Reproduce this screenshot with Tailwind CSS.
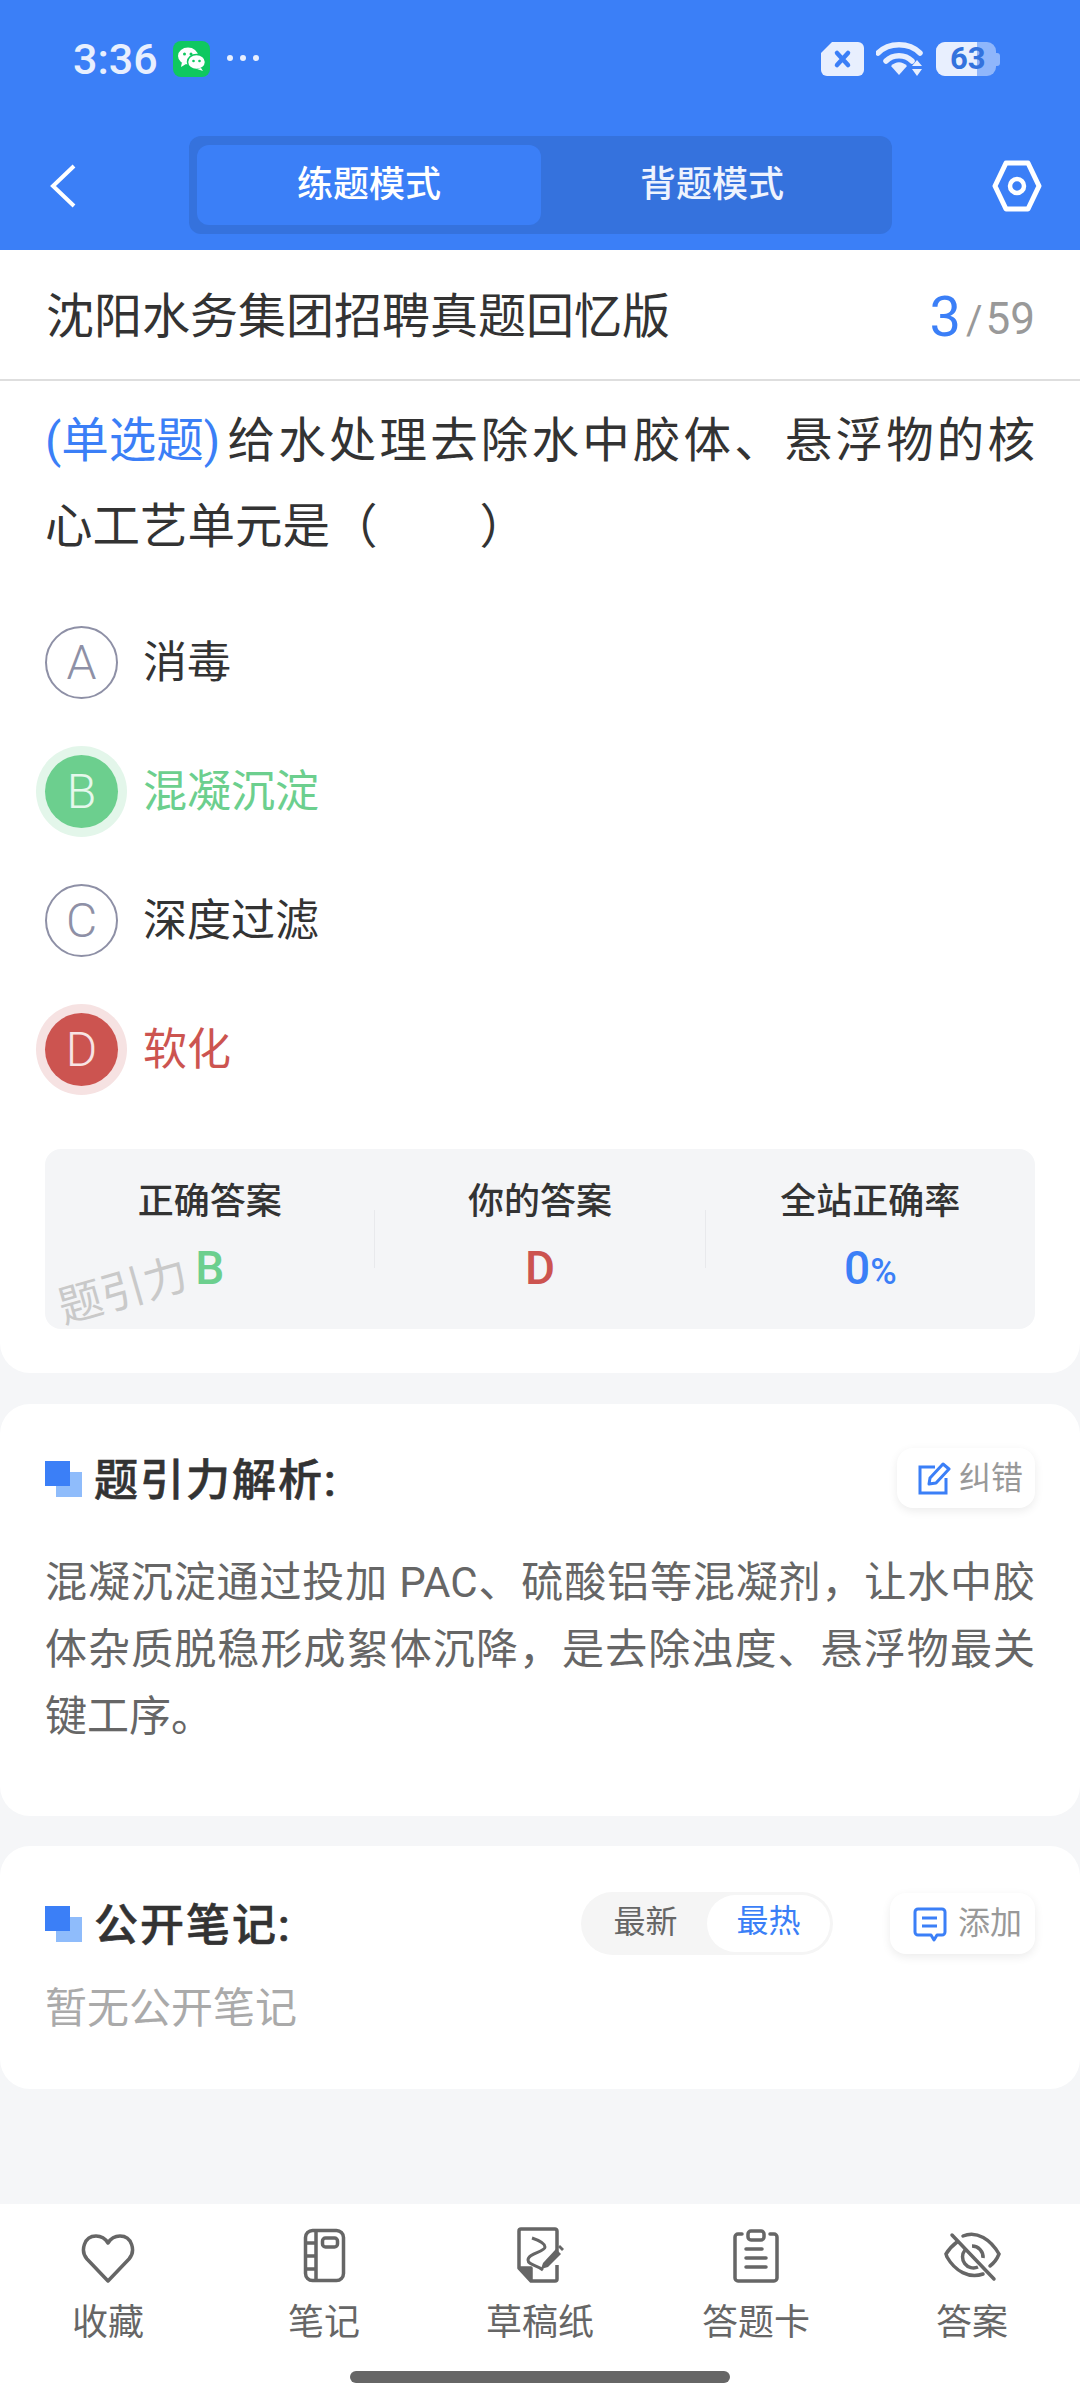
<!DOCTYPE html>
<html lang="zh-CN">
<head>
    <meta charset="UTF-8">
    <meta name="viewport" content="width=device-width, initial-scale=1.0">
    <title>练题模式</title>
    <script src="https://cdn.jsdelivr.net/npm/@tailwindcss/browser@4"></script>
</head>
<body class="font-[family-name:Roboto,'Noto_Sans_CJK_SC',sans-serif]">
<div class="w-[1080px] h-[2400px] bg-[#f5f6f8] flex flex-col overflow-hidden">

    <!-- blue header -->
    <header class="h-[250px] bg-[#3b7ff7] shrink-0">
        <div class="h-[118px] pt-[38px] pl-[73px] pr-[80px] flex items-start">
            <span class="text-[43px] leading-[42px] font-medium text-[#e8effe] w-[100px]">3:36</span>
            <svg class="mt-[3px]" width="37" height="36" viewBox="0 0 37 36">
                <rect width="37" height="36" rx="8" fill="#0fc860"/>
                <ellipse cx="15" cy="15" rx="10" ry="8.500" fill="#fff"/>
                <path d="M9 21l-1 5 5-3z" fill="#fff"/>
                <ellipse cx="23.500" cy="21" rx="9" ry="7.500" fill="#fff" stroke="#0fc860" stroke-width="1.500"/>
                <path d="M28 27l2 3-6-2z" fill="#fff"/>
                <circle cx="11.500" cy="13" r="1.500" fill="#0fc860"/><circle cx="18" cy="13" r="1.500" fill="#0fc860"/>
                <circle cx="20.500" cy="20" r="1.300" fill="#0fc860"/><circle cx="26.500" cy="20" r="1.300" fill="#0fc860"/>
            </svg>
            <div class="ml-[17px] mt-[17px] flex gap-[7px]">
                <i class="w-[6px] h-[6px] rounded-full bg-[#e8effe]"></i>
                <i class="w-[6px] h-[6px] rounded-full bg-[#e8effe]"></i>
                <i class="w-[6px] h-[6px] rounded-full bg-[#e8effe]"></i>
            </div>
            <div class="ml-auto mt-[4px] flex items-start">
                <svg width="43" height="34" viewBox="0 0 43 34">
                    <path d="M11 0H37a6 6 0 0 1 6 6V28a6 6 0 0 1-6 6H6a6 6 0 0 1-6-6V11z" fill="#e8effe"/>
                    <path d="M16 11l11 12M27 11L16 23" stroke="#3b7ff7" stroke-width="4.500" stroke-linecap="round"/>
                </svg>
                <svg class="ml-[12px]" width="47" height="34" viewBox="0 0 47 34">
                    <path d="M2 11C13 0 33 0 44 11" fill="none" stroke="#e8effe" stroke-width="5.500" stroke-linecap="round"/>
                    <path d="M10 19C17 12 29 12 36 19" fill="none" stroke="#e8effe" stroke-width="5.500" stroke-linecap="round"/>
                    <path d="M15 24C20 19 26 19 31 24L23 33z" fill="#e8effe"/>
                    <path d="M41 18l5 6H36zM41 34l5-7H36z" fill="#e8effe"/>
                </svg>
                <div class="ml-[13px] relative w-[60px] h-[34px] rounded-[9px] bg-[#8fb6fb]">
                    <div class="w-[41px] h-full rounded-l-[9px] bg-[#e8effe]"></div>
                    <span class="absolute left-[14px] top-0 text-[31px] leading-[34px] font-bold text-[#3372dd]">63</span>
                </div>
                <div class="w-[4px] h-[13px] mt-[11px] rounded-r-[3px] bg-[#8fb6fb]"></div>
            </div>
        </div>
        <nav class="flex items-start pl-[50px]">
            <svg class="mt-[46px]" width="26" height="44" viewBox="0 0 26 44">
                <path d="M24 2L3 22l21 20" fill="none" stroke="#fff" stroke-width="4"/>
            </svg>
            <div class="ml-[113px] mt-[18px] w-[703px] h-[98px] rounded-[12px] bg-[#3572dd] p-[9px] pl-[8px] pr-0 flex text-[36px] leading-[80px] font-medium text-center text-white">
                <div class="w-[344px] rounded-[12px] bg-[#3b7ff7]">练题模式</div>
                <div class="w-[342px] text-[#eef3fe]">背题模式</div>
            </div>
            <svg class="ml-[100px] mt-[41px]" width="50" height="54" viewBox="0 0 50 54">
                <path d="M14 4H36L47 27 36 50H14L3 27z" fill="none" stroke="#fff" stroke-width="5" stroke-linejoin="round"/>
                <circle cx="25" cy="27" r="7" fill="none" stroke="#fff" stroke-width="4.500"/>
            </svg>
        </nav>
    </header>

    <!-- question card -->
    <section class="bg-white rounded-b-[30px] h-[1123px] shrink-0">
        <div class="h-[131px] border-b-2 border-[#dedede] pt-[4px] px-[45px] pl-[46px] flex items-center justify-between">
            <h1 class="text-[48px] font-normal text-[#333]">沈阳水务集团招聘真题回忆版</h1>
            <div class="flex items-baseline text-[40px] text-[#999]">
                <span class="text-[56px] text-[#3b7ff7]">3</span>
                <span class="ml-[5px] -translate-y-[2px]">/</span>
                <span class="ml-[3px] text-[44px] -translate-y-[2px]">59</span>
            </div>
        </div>
        <p class="mt-[17px] mx-[45px] text-[47.500px] leading-[86px] text-[#333] text-justify [text-align-last:justify]"><span class="inline-block mr-[4px] text-[#3b7ff7]">(单选题)</span>给水处理去除水中胶体、悬浮物的核</p>
        <p class="mx-[45px] text-[47.500px] leading-[86px] text-[#333]">心工艺单元是（<span class="inline-block w-[102px]"></span>）</p>

        <ul class="mt-[28px] px-[45px]">
            <li class="h-[129px] flex items-center">
                <div class="w-[73px] h-[73px] rounded-full border-2 border-[#8e90a6] text-[#8e90a6] text-[48px] font-light flex items-center justify-center">A</div>
                <span class="ml-[25px] text-[44px] text-[#333]">消毒</span>
            </li>
            <li class="h-[129px] flex items-center">
                <div class="w-[73px] h-[73px] rounded-full bg-[#6ccf8e] ring-[9px] ring-[#e3f6ea] text-[#e6f8ec] text-[48px] font-light flex items-center justify-center">B</div>
                <span class="ml-[25px] text-[44px] text-[#6ccf8e]">混凝沉淀</span>
            </li>
            <li class="h-[129px] flex items-center">
                <div class="w-[73px] h-[73px] rounded-full border-2 border-[#8e90a6] text-[#8e90a6] text-[48px] font-light flex items-center justify-center">C</div>
                <span class="ml-[25px] text-[44px] text-[#333]">深度过滤</span>
            </li>
            <li class="h-[129px] flex items-center">
                <div class="w-[73px] h-[73px] rounded-full bg-[#cc5450] ring-[9px] ring-[#f6e2e2] text-[#f8e4e4] text-[48px] font-light flex items-center justify-center">D</div>
                <span class="ml-[25px] text-[44px] text-[#cc5450]">软化</span>
            </li>
        </ul>

        <div class="relative mt-[35px] mx-[45px] h-[180px] rounded-[16px] bg-[#f4f5f7] flex items-center">
            <div class="flex-1 h-full flex flex-col items-center pt-[31px]">
                <span class="text-[36px] leading-[44px] font-medium text-[#333]">正确答案</span>
                <span class="mt-[18px] text-[46px] leading-[52px] font-medium text-[#6ccf8e]">B</span>
            </div>
            <div class="w-px h-[58px] bg-[#e8e9ec]"></div>
            <div class="flex-1 h-full flex flex-col items-center pt-[31px]">
                <span class="text-[36px] leading-[44px] font-medium text-[#333]">你的答案</span>
                <span class="mt-[18px] text-[46px] leading-[52px] font-medium text-[#cc5450]">D</span>
            </div>
            <div class="w-px h-[58px] bg-[#e8e9ec]"></div>
            <div class="flex-1 h-full flex flex-col items-center pt-[31px]">
                <span class="text-[36px] leading-[44px] font-medium text-[#333]">全站正确率</span>
                <span class="mt-[18px] text-[46px] leading-[52px] font-medium text-[#3b7ff7]">0<span class="text-[36px]">%</span></span>
            </div>
            <!-- watermark -->
            <span class="absolute left-[12px] top-[117px] text-[44px] leading-[50px] text-[#c9c9c9] -rotate-[16deg]">题引力</span>
        </div>
    </section>

    <!-- explanation card -->
    <section class="mt-[31px] bg-white rounded-[30px] h-[412px] shrink-0 pt-[44px] px-[45px]">
        <div class="h-[60px] flex items-center justify-between">
            <div class="flex items-center">
                <div class="relative w-[37px] h-[36px] mt-[2px]">
                    <i class="absolute left-[11px] top-[11px] w-[26px] h-[25px] bg-[#8fbcfb]"></i>
                    <i class="absolute left-0 top-0 w-[25px] h-[25px] bg-[#3b7ff7]"></i>
                </div>
                <h2 class="ml-[12px] pt-[5px] text-[44px] font-medium tracking-[2px] text-[#333] [-webkit-text-stroke:0.6px_#333]">题引力解析:</h2>
            </div>
            <button class="w-[138px] h-[60px] rounded-[16px] bg-white shadow-[0_3px_10px_rgba(0,0,0,0.08)] flex items-center pl-[21px] gap-[8px] text-[32px] text-[#999]">
                <svg width="33" height="33" viewBox="0 0 33 33">
                    <path d="M17 5H2V31H28V16" fill="none" stroke="#3b7ff7" stroke-width="3"/>
                    <path d="M12 16L25 2l6 5L18 21l-7 1z" fill="none" stroke="#3b7ff7" stroke-width="3" stroke-linejoin="round"/>
                </svg>
                纠错
            </button>
        </div>
        <p class="mt-[41px] text-[42px] leading-[67px] text-[#666] text-justify">混凝沉淀通过投加 PAC、硫酸铝等混凝剂，让水中胶体杂质脱稳形成絮体沉降，是去除浊度、悬浮物最关键工序。</p>
    </section>

    <!-- public notes card -->
    <section class="mt-[30px] bg-white rounded-[30px] h-[243px] shrink-0 pt-[46px] px-[45px]">
        <div class="h-[63px] flex items-center">
            <div class="relative w-[37px] h-[36px]">
                <i class="absolute left-[11px] top-[11px] w-[26px] h-[25px] bg-[#8fbcfb]"></i>
                <i class="absolute left-0 top-0 w-[25px] h-[25px] bg-[#3b7ff7]"></i>
            </div>
            <h2 class="ml-[12px] pt-[5px] text-[44px] font-medium tracking-[2px] text-[#333] [-webkit-text-stroke:0.6px_#333]">公开笔记:</h2>
            <div class="ml-auto w-[252px] h-[63px] rounded-full bg-[#f5f5f5] p-[3px] flex items-center text-[32px] text-center">
                <span class="w-[123px] pb-[3px] text-[#666]">最新</span>
                <span class="w-[123px] h-[57px] leading-[53px] rounded-full bg-white text-[#3b7ff7]">最热</span>
            </div>
            <button class="ml-[57px] w-[145px] h-[61px] rounded-[16px] bg-white shadow-[0_3px_10px_rgba(0,0,0,0.08)] flex items-center pl-[22px] gap-[10px] text-[32px] text-[#999]">
                <svg width="36" height="36" viewBox="0 0 36 36">
                    <path d="M6 3H30a3 3 0 0 1 3 3V26a3 3 0 0 1-3 3H25l-3 5-3-5H6a3 3 0 0 1-3-3V6a3 3 0 0 1 3-3z" fill="none" stroke="#3b7ff7" stroke-width="3" stroke-linejoin="round"/>
                    <path d="M10 12H25M10 20H25" stroke="#3b7ff7" stroke-width="3"/>
                </svg>
                <span class="pb-[2px]">添加</span>
            </button>
        </div>
        <p class="mt-[26px] text-[42px] leading-[56px] text-[#aaa]">暂无公开笔记</p>
    </section>

    <div class="flex-1"></div>

    <!-- bottom bar -->
    <footer class="h-[196px] bg-white shrink-0 pt-[23px]">
        <div class="grid grid-cols-5 text-center text-[36px] leading-[44px] text-[#666]">
            <div class="flex flex-col items-center">
                <svg width="56" height="56" viewBox="0 0 56 56">
                    <path d="M28 54L7 32C0 24 4 9 16 9 21 9 25 11 28 16 31 11 35 9 40 9 52 9 56 24 49 32z" fill="none" stroke="#666" stroke-width="3.500" stroke-linejoin="round"/>
                </svg>
                <span class="mt-[18px]">收藏</span>
            </div>
            <div class="flex flex-col items-center">
                <svg width="56" height="56" viewBox="0 0 56 56">
                    <rect x="9.500" y="3.500" width="38" height="50" rx="7" fill="none" stroke="#666" stroke-width="3.500"/>
                    <path d="M20 3.500V53.500M10 16H20M10 29H20M10 42H20" fill="none" stroke="#666" stroke-width="3.500"/>
                    <rect x="26.500" y="11" width="15" height="9" rx="3" fill="none" stroke="#666" stroke-width="3.500"/>
                </svg>
                <span class="mt-[18px]">笔记</span>
            </div>
            <div class="flex flex-col items-center">
                <svg width="56" height="56" viewBox="0 0 56 56">
                    <path d="M45 25V4a2 2 0 0 0-2-2H9A2 2 0 0 0 7 4V41L19 54H43a2 2 0 0 0 2-2V38M7 41H19V54" fill="none" stroke="#666" stroke-width="3.500" stroke-linejoin="round"/>
                    <path d="M8 42H18V52z" fill="#666"/>
                    <path d="M20 11C26 13 33 16 33 20 33 25 16 26 16 33 16 38 25 38 31 43" fill="none" stroke="#666" stroke-width="3"/>
                    <path d="M31 36L44 22l5 5L36 40l-7 2z" fill="#666"/>
                    <path d="M46 20l2-2 4 4-2 2z" fill="#666"/>
                </svg>
                <span class="mt-[18px]">草稿纸</span>
            </div>
            <div class="flex flex-col items-center">
                <svg width="56" height="56" viewBox="0 0 56 56">
                    <path d="M14 7H10a3 3 0 0 0-3 3V51a3 3 0 0 0 3 3H46a3 3 0 0 0 3-3V10a3 3 0 0 0-3-3H42" fill="none" stroke="#666" stroke-width="3.500" stroke-linecap="round"/>
                    <rect x="20" y="4" width="16" height="9" rx="3" fill="none" stroke="#666" stroke-width="3.500"/>
                    <path d="M18 22H34M18 31H38M18 40H38" stroke="#666" stroke-width="3.500" stroke-linecap="round"/>
                </svg>
                <span class="mt-[18px]">答题卡</span>
            </div>
            <div class="flex flex-col items-center">
                <svg class="ml-[2px]" width="58" height="56" viewBox="0 0 58 56">
                    <path d="M19 9C33 3 47 13 55 27 53 32 50 36 46 39M39 47C25 52 11 44 3 30L2 27C5 22 9 18 13 15" fill="none" stroke="#666" stroke-width="3.500" stroke-linecap="round"/>
                    <path d="M21 23a11 11 0 0 0 13 17M28 19a11 11 0 0 1 11 12" fill="none" stroke="#666" stroke-width="3.500"/>
                    <path d="M8 8L50 52" stroke="#666" stroke-width="3.500" stroke-linecap="round"/>
                </svg>
                <span class="mt-[18px]">答案</span>
            </div>
        </div>
        <div class="mt-[26px] mx-auto w-[380px] h-[12px] rounded-full bg-[#666]"></div>
    </footer>
</div>
</body>
</html>
